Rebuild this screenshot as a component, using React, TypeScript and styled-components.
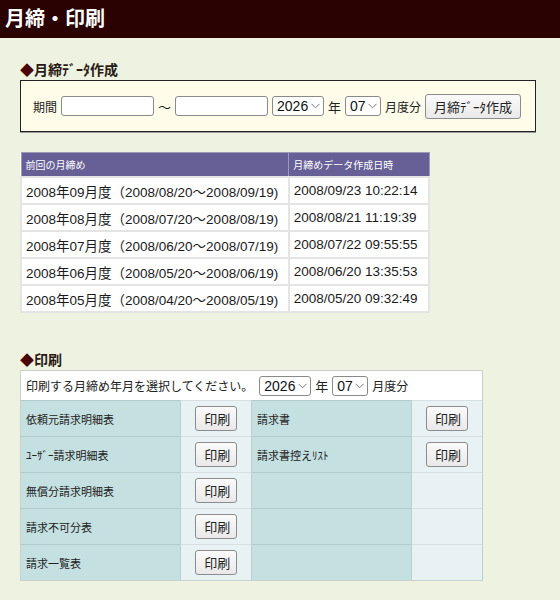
import React from "react";
import styled, { createGlobalStyle } from "styled-components";

const FONT = `"Liberation Sans", "Noto Sans CJK JP", sans-serif`;

const GlobalStyle = createGlobalStyle`
  body {
    margin: 0;
    background: #eef3e1;
    font-family: ${FONT};
    color: #222;
  }
`;

const TitleBar = styled.header`
  height: 38px;
  background: #2b0202;
  color: #fff;
  font-size: 20px;
  font-weight: bold;
  line-height: 38px;
  padding-left: 5px;
`;

const Main = styled.main`
  padding: 23px 20px 20px 20px;
`;

const Heading = styled.h2<{ $top?: number }>`
  margin: ${(p) => p.$top ?? 0}px 0 1px 0;
  font-size: 14px;
  line-height: 18px;
  font-weight: bold;
  color: #2a1a14;
  &::before {
    content: "◆";
    color: #4a0606;
  }
`;

const FormBox = styled.div`
  width: 502px;
  height: 50px;
  background: #fffde9;
  border: 1px solid #222;
  box-shadow: 0 1px 0 #999;
  display: flex;
  align-items: center;
  padding-left: 12px;
  box-sizing: content-box;
  font-size: 12px;
  color: #222;
`;

const Label = styled.span<{ $size?: number; $gap?: number }>`
  font-size: ${(p) => p.$size ?? 12}px;
  margin: 0 ${(p) => p.$gap ?? 4}px;
  white-space: nowrap;
`;

const Spacer = styled.span<{ $w: number }>`
  display: inline-block;
  width: ${(p) => p.$w}px;
`;

const TextInput = styled.input`
  width: 93px;
  height: 20px;
  box-sizing: border-box;
  border: 1px solid #8a8a8a;
  border-radius: 3px;
  background: #fff;
  padding: 0 3px;
  font-family: ${FONT};
`;

const SelectWrap = styled.span<{ $w: number }>`
  display: inline-flex;
  align-items: center;
  width: ${(p) => p.$w}px;
  height: 20px;
  box-sizing: border-box;
  border: 1px solid #8a8a8a;
  border-radius: 3px;
  background: #fff;
  padding-right: 3px;
`;

const Select = styled.select`
  appearance: none;
  border: none;
  background: transparent;
  font-family: ${FONT};
  font-size: 14px;
  color: #111;
  padding: 0 0 0 4px;
  flex: 1;
  min-width: 0;
  outline: none;
`;

const Button = styled.button<{ $w?: number }>`
  height: 25px;
  ${(p) => (p.$w ? `width: ${p.$w}px;` : "")}
  padding: 0 8px;
  border: 1px solid #8c8c8c;
  border-radius: 3px;
  background: linear-gradient(#fafafa, #e9e9e9);
  font-family: ${FONT};
  font-size: 13px;
  color: #222;
  white-space: nowrap;
`;

const HistoryTable = styled.table`
  margin-top: 20px;
  width: 410px;
  table-layout: fixed;
  border-collapse: collapse;
  background: #fff;
  border: 1px solid #d6d6d6;
`;

const Th = styled.th<{ $pct: number }>`
  width: ${(p) => p.$pct}%;
  background: #666096;
  color: #fff;
  font-size: 10px;
  font-weight: normal;
  text-align: left;
  height: 23px;
  padding: 0 4px;
  border: 1px solid #9c98b8;
`;

const Td = styled.td`
  font-size: 13.5px;
  height: 25px;
  padding: 0 4px;
  border: 2px solid #e4e4e4;
  white-space: nowrap;
  overflow: hidden;
  color: #1a1a1a;
`;

const PrintTable = styled.table`
  width: 463px;
  border-collapse: collapse;
  border: 1px solid #c9cfcf;
`;

const SelectRow = styled.td`
  background: #fff;
  height: 29px;
  padding: 0 5px;
  font-size: 12px;
  white-space: nowrap;
`;

const InlineRow = styled.span`
  display: inline-flex;
  align-items: center;
`;

const Cell = styled.td<{ $kind: "name" | "action" }>`
  background: ${(p) => (p.$kind === "name" ? "#c5e0e1" : "#e8f1f3")};
  border-top: 1px solid ${(p) => (p.$kind === "name" ? "#b2cccd" : "#d6e0e2")};
  border-right: 1px solid #bcd0d2;
  height: 35px;
  padding: 0 5px;
  font-size: 11px;
  color: #222;
  text-align: ${(p) => (p.$kind === "action" ? "center" : "left")};
  width: ${(p) => (p.$kind === "name" ? 150 : 60)}px;
  white-space: nowrap;
`;

const Chevron = () => (
  <svg width="9" height="6" viewBox="0 0 9 6" style={{ flexShrink: 0 }}>
    <polyline points="0.5,0.8 4.5,4.8 8.5,0.8" fill="none" stroke="#777" strokeWidth="1" />
  </svg>
);

const YearMonth: React.FC = () => (
  <>
    <SelectWrap $w={52}>
      <Select defaultValue="2026">
        <option>2026</option>
      </Select>
      <Chevron />
    </SelectWrap>
    <Label $size={13}>年</Label>
    <SelectWrap $w={36}>
      <Select defaultValue="07">
        <option>07</option>
      </Select>
      <Chevron />
    </SelectWrap>
    <Label $size={12}>月度分</Label>
  </>
);

const history = [
  ["2008年09月度（2008/08/20〜2008/09/19)", "2008/09/23 10:22:14"],
  ["2008年08月度（2008/07/20〜2008/08/19)", "2008/08/21 11:19:39"],
  ["2008年07月度（2008/06/20〜2008/07/19)", "2008/07/22 09:55:55"],
  ["2008年06月度（2008/05/20〜2008/06/19)", "2008/06/20 13:35:53"],
  ["2008年05月度（2008/04/20〜2008/05/19)", "2008/05/20 09:32:49"],
];

const prints: [string, string][] = [
  ["依頼元請求明細表", "請求書"],
  ["ﾕｰｻﾞｰ請求明細表", "請求書控えﾘｽﾄ"],
  ["無償分請求明細表", ""],
  ["請求不可分表", ""],
  ["請求一覧表", ""],
];

const App: React.FC = () => {
  return (
    <>
      <GlobalStyle />
      <TitleBar>月締・印刷</TitleBar>
      <Main>
        <Heading>月締ﾃﾞｰﾀ作成</Heading>
        <FormBox>
          <Label $gap={0} style={{ marginRight: 4 }}>期間</Label>
          <TextInput />
          <Label $size={13} $gap={4}>〜</Label>
          <TextInput />
          <Spacer $w={4} />
          <YearMonth />
          <Button>月締ﾃﾞｰﾀ作成</Button>
        </FormBox>

        <HistoryTable>
          <thead>
            <tr>
              <Th $pct={66.3}>前回の月締め</Th>
              <Th $pct={33.7}>月締めデータ作成日時</Th>
            </tr>
          </thead>
          <tbody>
            {history.map(([period, date]) => (
              <tr key={date}>
                <Td>{period}</Td>
                <Td>{date}</Td>
              </tr>
            ))}
          </tbody>
        </HistoryTable>

        <Heading $top={38}>印刷</Heading>
        <PrintTable>
          <tbody>
            <tr>
              <SelectRow colSpan={4}>
                <InlineRow>
                  印刷する月締め年月を選択してください。
                  <Spacer $w={6} />
                  <YearMonth />
                </InlineRow>
              </SelectRow>
            </tr>
            {prints.map(([left, right]) => (
              <tr key={left}>
                <Cell $kind="name">{left}</Cell>
                <Cell $kind="action">
                  <Button $w={42}>印刷</Button>
                </Cell>
                <Cell $kind="name">{right}</Cell>
                <Cell $kind="action">{right && <Button $w={42}>印刷</Button>}</Cell>
              </tr>
            ))}
          </tbody>
        </PrintTable>
      </Main>
    </>
  );
};

export default App;
